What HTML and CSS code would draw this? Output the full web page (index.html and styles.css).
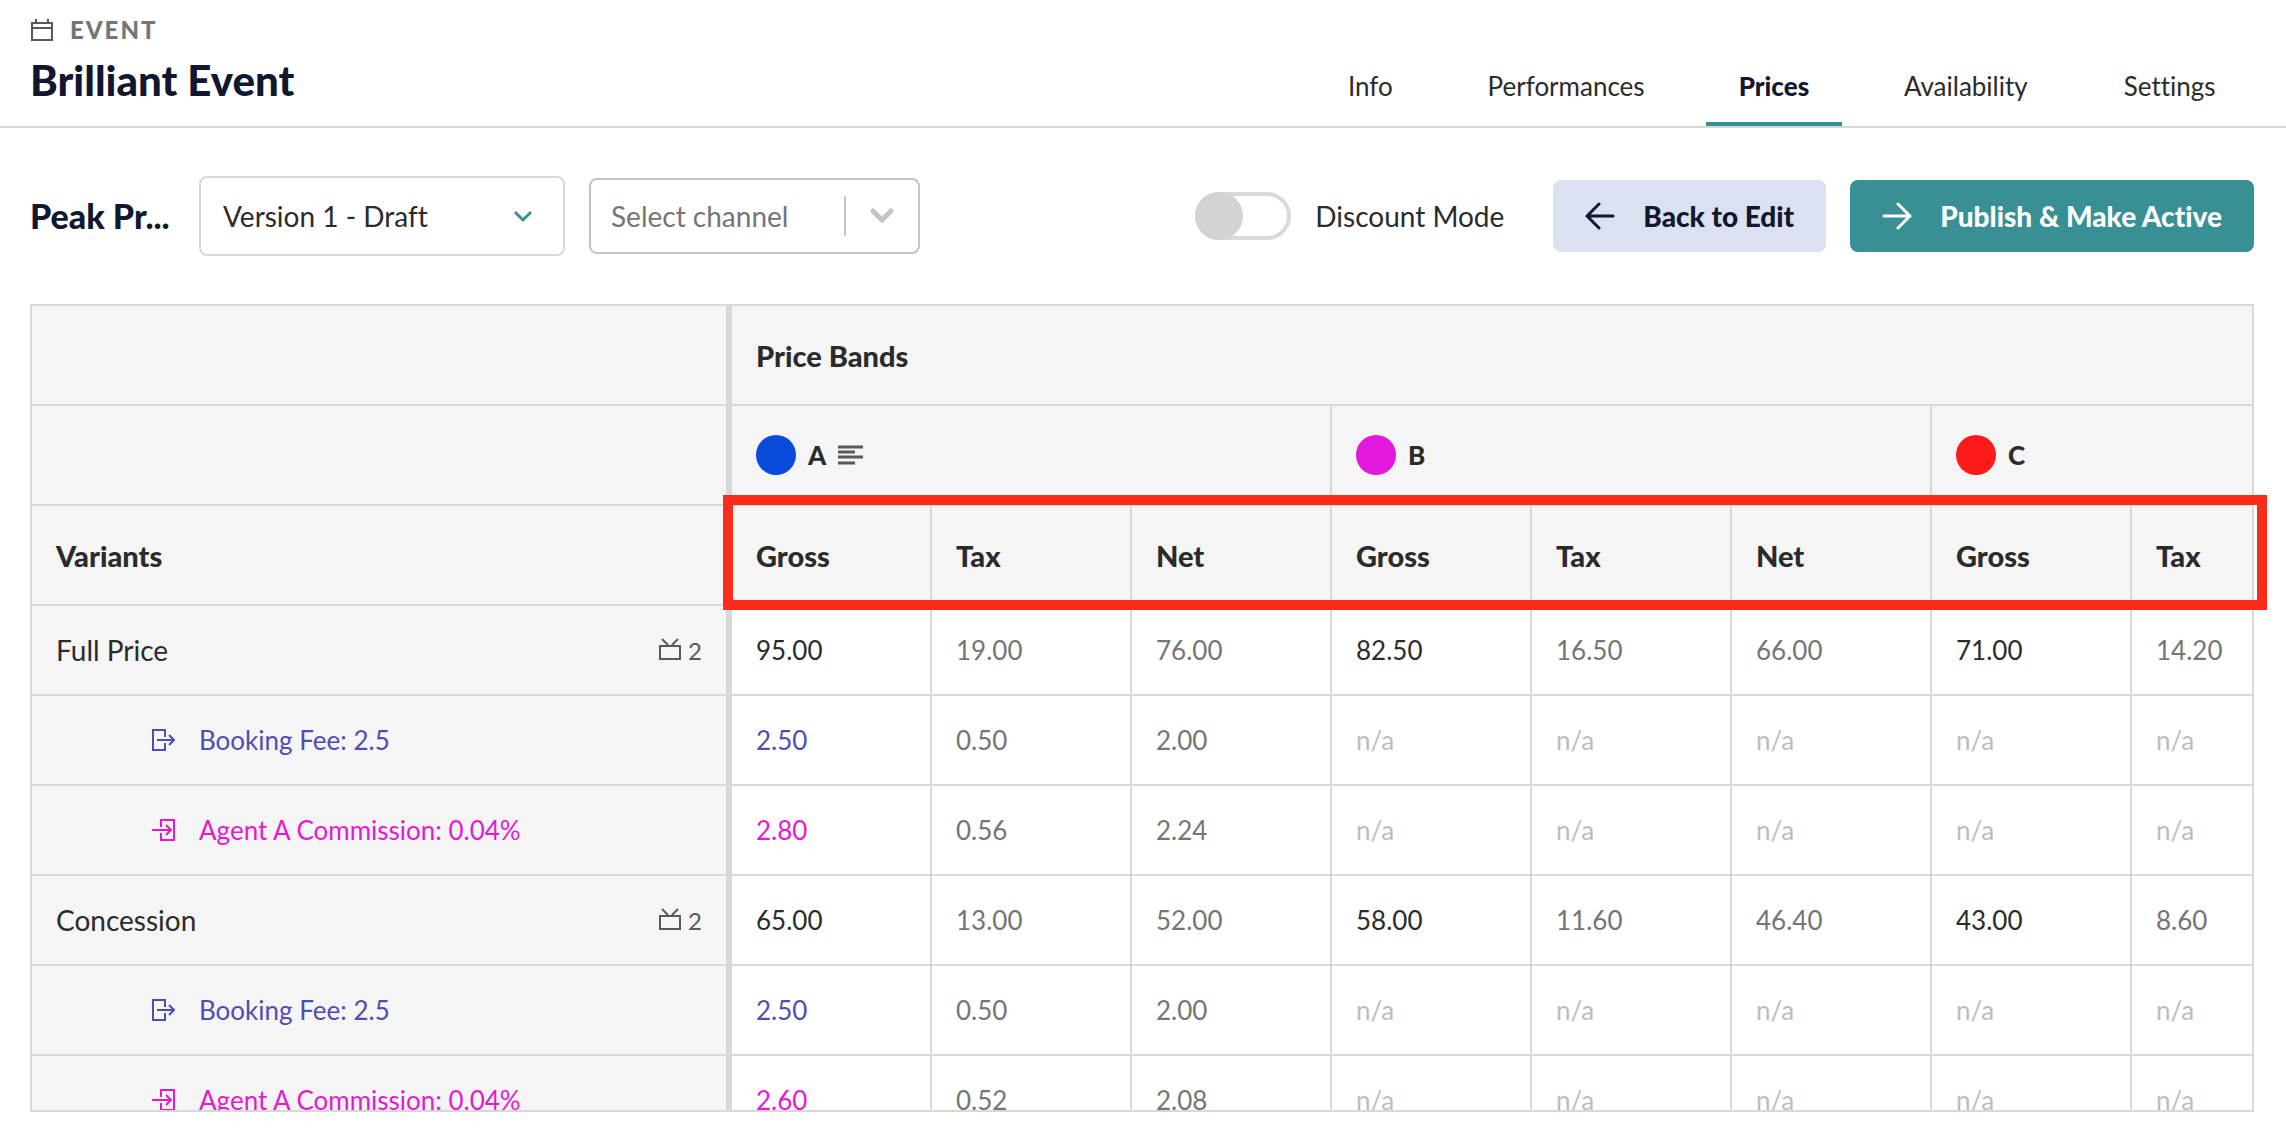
FILE: index.html
```html
<!DOCTYPE html>
<html lang="en">
<head>
    <meta charset="UTF-8">
    <meta name="viewport" content="width=device-width, initial-scale=1.0">
    <title>Brilliant Event - Prices</title>
    <link rel="stylesheet" href="styles.css">
</head>
<body>
    <!-- Icons used more than once -->
    <svg class="sprite" aria-hidden="true">
        <symbol id="icon-tv" viewBox="0 0 24 24"><path d="M2 8h20v13H2zM4 1l6 6M20 1l-6 6"/></symbol>
        <symbol id="icon-out" viewBox="0 0 24 24"><path d="M14 9V2H2v20h12v-7M6 12h17M18 7l5 5-5 5"/></symbol>
        <symbol id="icon-in" viewBox="0 0 24 24"><path d="M10 9V2h13v20H10v-7M1 12h19M15 7l5 5-5 5"/></symbol>
    </svg>

    <header class="header">
        <div class="header-title">
            <div class="eyebrow">
                <svg class="icon" viewBox="0 0 24 24"><path d="M2 5h20v17H2zM2 10h20M6 1v4M18 1v4"/></svg>
                <span>EVENT</span>
            </div>
            <h1>Brilliant Event</h1>
        </div>
        <nav class="tabs">
            <a href="#" data-label="Info">Info</a>
            <a href="#" data-label="Performances">Performances</a>
            <a href="#" data-label="Prices" class="active">Prices</a>
            <a href="#" data-label="Availability">Availability</a>
            <a href="#" data-label="Settings">Settings</a>
        </nav>
    </header>

    <div class="toolbar">
        <h2>Peak Pr...</h2>
        <div class="select version">
            <select aria-label="Version">
                <option>Version 1 - Draft</option>
            </select>
            <svg class="chevron" viewBox="0 0 20 14"><path d="M2 3l8 8 8-8"/></svg>
        </div>
        <div class="select channel">
            <select aria-label="Channel">
                <option>Select channel</option>
            </select>
            <svg class="chevron" viewBox="0 0 26 18"><path d="M4 4l9 9 9-9"/></svg>
        </div>
        <div class="actions">
            <input type="checkbox" class="switch" id="discountMode">
            <label for="discountMode">Discount Mode</label>
            <button type="button" class="btn btn-light">
                <svg class="arrow" viewBox="0 0 30 28"><path d="M28 14H2M14 2L2 14l12 12"/></svg>
                Back to Edit
            </button>
            <button type="button" class="btn btn-primary">
                <svg class="arrow" viewBox="0 0 30 28"><path d="M2 14h26M16 2l12 12-12 12"/></svg>
                Publish &amp; Make Active
            </button>
        </div>
    </div>

    <div class="prices">
        <div class="prices-scroll">
            <table>
                <colgroup>
                    <col class="col-variant">
                    <col span="8">
                </colgroup>
                <thead>
                    <tr>
                        <th></th>
                        <th colspan="8">Price Bands</th>
                    </tr>
                    <tr>
                        <th></th>
                        <th colspan="3">
                            <div class="band">
                                <span class="dot blue"></span>A
                                <svg class="lines" viewBox="0 0 25 20"><path d="M0 2h25M0 7h17M0 12h25M0 18h17"/></svg>
                            </div>
                        </th>
                        <th colspan="3"><div class="band"><span class="dot pink"></span>B</div></th>
                        <th colspan="2"><div class="band"><span class="dot red"></span>C</div></th>
                    </tr>
                    <tr>
                        <th>Variants</th>
                        <th>Gross</th>
                        <th>Tax</th>
                        <th>Net</th>
                        <th>Gross</th>
                        <th>Tax</th>
                        <th>Net</th>
                        <th>Gross</th>
                        <th>Tax</th>
                    </tr>
                </thead>
                <tbody>
                    <tr>
                        <th><div class="variant">Full Price <span class="count"><svg class="icon"><use href="#icon-tv"/></svg>2</span></div></th>
                        <td class="gross">95.00</td><td>19.00</td><td>76.00</td>
                        <td class="gross">82.50</td><td>16.50</td><td>66.00</td>
                        <td class="gross">71.00</td><td>14.20</td>
                    </tr>
                    <tr class="fee">
                        <th><div class="sub"><svg class="icon"><use href="#icon-out"/></svg>Booking Fee: 2.5</div></th>
                        <td class="gross">2.50</td><td>0.50</td><td>2.00</td>
                        <td class="na">n/a</td><td class="na">n/a</td><td class="na">n/a</td>
                        <td class="na">n/a</td><td class="na">n/a</td>
                    </tr>
                    <tr class="commission">
                        <th><div class="sub"><svg class="icon"><use href="#icon-in"/></svg>Agent A Commission: 0.04%</div></th>
                        <td class="gross">2.80</td><td>0.56</td><td>2.24</td>
                        <td class="na">n/a</td><td class="na">n/a</td><td class="na">n/a</td>
                        <td class="na">n/a</td><td class="na">n/a</td>
                    </tr>
                    <tr>
                        <th><div class="variant">Concession <span class="count"><svg class="icon"><use href="#icon-tv"/></svg>2</span></div></th>
                        <td class="gross">65.00</td><td>13.00</td><td>52.00</td>
                        <td class="gross">58.00</td><td>11.60</td><td>46.40</td>
                        <td class="gross">43.00</td><td>8.60</td>
                    </tr>
                    <tr class="fee">
                        <th><div class="sub"><svg class="icon"><use href="#icon-out"/></svg>Booking Fee: 2.5</div></th>
                        <td class="gross">2.50</td><td>0.50</td><td>2.00</td>
                        <td class="na">n/a</td><td class="na">n/a</td><td class="na">n/a</td>
                        <td class="na">n/a</td><td class="na">n/a</td>
                    </tr>
                    <tr class="commission">
                        <th><div class="sub"><svg class="icon"><use href="#icon-in"/></svg>Agent A Commission: 0.04%</div></th>
                        <td class="gross">2.60</td><td>0.52</td><td>2.08</td>
                        <td class="na">n/a</td><td class="na">n/a</td><td class="na">n/a</td>
                        <td class="na">n/a</td><td class="na">n/a</td>
                    </tr>
                </tbody>
            </table>
        </div>
        <!-- Marks the gross / tax / net header row -->
        <div class="highlight"></div>
    </div>
</body>
</html>
```

FILE: styles.css
```css
* {
    box-sizing: border-box;
}
body {
    font-family: Lato, sans-serif;
    font-variant-ligatures: none;
    font-size: 26px;
    color: #2b2b2b;
    background-color: #fff;
    margin: 0;
    height: 100vh;
    display: flex;
    flex-direction: column;
    overflow: hidden;
}
h1, h2 {
    margin: 0;
    color: #10172f;
    font-weight: 900;
}
.sprite {
    display: none;
}
svg {
    fill: none;
    stroke: currentColor;
    stroke-width: 2px;
    flex-shrink: 0;
}
.icon {
    width: 24px;
    height: 24px;
}

/* Header */
.header {
    display: flex;
    justify-content: space-between;
    align-items: flex-end;
    padding: 16px 36px 0 30px;
    border-bottom: 2px solid #d8d8d8;
}
.header-title {
    padding-bottom: 23px;
}
.eyebrow {
    display: flex;
    align-items: center;
    gap: 16px;
    font-size: 24px;
    line-height: 28px;
    font-weight: 900;
    letter-spacing: 2px;
    color: #757575;
}
.eyebrow .icon {
    color: #595959;
}
h1 {
    font-size: 42px;
    line-height: 46px;
    padding-top: 13px;
}
.tabs {
    display: flex;
    gap: 26px;
}
.tabs a {
    display: flex;
    flex-direction: column;
    align-items: center;
    padding: 0 33px 18px;
    border-bottom: 4px solid transparent;
    line-height: 36px;
    color: #2b2b2b;
    text-decoration: none;
}
/* Keeps the tab as wide as its bold label */
.tabs a::after {
    content: attr(data-label);
    height: 0;
    overflow: hidden;
    visibility: hidden;
    font-weight: 900;
}
.tabs .active {
    color: #10172f;
    font-weight: 900;
    border-color: #389095;
}

/* Toolbar */
.toolbar {
    display: flex;
    align-items: center;
    padding: 48px 32px 48px 30px;
    font-size: 28px;
}
h2 {
    font-size: 34px;
    line-height: 40px;
    width: 169px;
}
.select {
    display: grid;
    align-items: center;
}
.select select,
.select .chevron {
    grid-area: 1 / 1;
}
.select select {
    appearance: none;
    width: 100%;
    height: 100%;
    font: inherit;
    color: inherit;
    background-color: #fff;
    border: 2px solid #d8d8d8;
    border-radius: 8px;
    padding: 0 22px;
}
.select .chevron {
    justify-self: end;
    pointer-events: none;
}
.version {
    width: 366px;
    height: 80px;
    margin-right: 24px;
}
.version .chevron {
    width: 20px;
    height: 14px;
    margin-right: 32px;
    color: #389095;
    stroke-width: 3px;
}
.channel {
    width: 331px;
    height: 76px;
    color: #757575;
}
.channel select {
    border-color: #c4c4c4;
    padding: 0 20px;
}
.channel::after {
    content: "";
    grid-area: 1 / 1;
    justify-self: end;
    width: 2px;
    height: 40px;
    margin-right: 74px;
    background-color: #c4c4c4;
}
.channel .chevron {
    width: 26px;
    height: 18px;
    margin-right: 25px;
    color: #c4c4c4;
    stroke-width: 5px;
    stroke-linecap: round;
}
.actions {
    display: flex;
    align-items: center;
    gap: 24px;
    margin-left: auto;
}
.switch {
    appearance: none;
    width: 96px;
    height: 48px;
    margin: 0;
    border: 4px solid #d9d9d9;
    border-radius: 24px;
    background-color: #fff;
}
.switch::before {
    content: "";
    display: block;
    width: 48px;
    height: 48px;
    margin: -4px;
    border-radius: 50%;
    background-color: #d3d3d3;
}
.switch:checked::before {
    margin-left: 44px;
}
.actions label {
    padding-right: 25px;
}
.btn {
    display: flex;
    align-items: center;
    gap: 28px;
    height: 72px;
    padding: 0 32px;
    border: none;
    border-radius: 8px;
    font: inherit;
    font-variant-ligatures: none;
    font-weight: 900;
    cursor: pointer;
}
.btn .arrow {
    width: 30px;
    height: 28px;
    stroke-width: 3px;
    stroke-linecap: round;
}
.btn-light {
    background-color: #dbe1f1;
    color: #10172f;
}
.btn-primary {
    background-color: #389095;
    color: #fff;
}

/* Price table */
.prices {
    position: relative;
    flex: 1;
    min-height: 0;
    margin: 0 32px 24px 30px;
}
.prices-scroll {
    height: 100%;
    border: 2px solid #d8d8d8;
    overflow: hidden;
}
table {
    table-layout: fixed;
    width: 2300px;
    border-collapse: separate;
    border-spacing: 0;
}
.col-variant {
    width: 700px;
}
th, td {
    height: 90px;
    padding: 0 24px;
    text-align: left;
    border-right: 2px solid #d8d8d8;
    border-bottom: 2px solid #d8d8d8;
}
th {
    background-color: #f5f5f5;
    font-size: 28px;
}
th:first-child {
    border-right-width: 6px;
}
thead th {
    height: 100px;
    font-size: 29px;
    font-weight: 900;
}
tbody th {
    font-weight: 400;
}
td {
    color: #757575;
}
.gross {
    color: #2b2b2b;
}
.fee th, .fee .gross {
    color: #4f4db3;
}
.commission th, .commission .gross {
    color: #e619d3;
}
td.na {
    color: #bdbdbd;
}
.band {
    display: flex;
    align-items: center;
    gap: 12px;
    font-size: 26px;
}
.dot {
    width: 40px;
    height: 40px;
    border-radius: 50%;
}
.blue {
    background-color: #0a4bdc;
}
.pink {
    background-color: #e219dc;
}
.red {
    background-color: #ff1a1a;
}
.lines {
    width: 25px;
    height: 20px;
    color: #595959;
    stroke-width: 3px;
}
.variant {
    display: flex;
    align-items: center;
    justify-content: space-between;
}
.count {
    display: flex;
    align-items: center;
    gap: 6px;
    font-size: 24px;
    color: #595959;
}
.sub {
    display: flex;
    align-items: center;
    gap: 24px;
    padding-left: 95px;
    font-size: 26px;
}
.highlight {
    position: absolute;
    top: 191px;
    left: 693px;
    right: -13px;
    height: 115px;
    border: 10px solid #fc2b1a;
    pointer-events: none;
}
```
